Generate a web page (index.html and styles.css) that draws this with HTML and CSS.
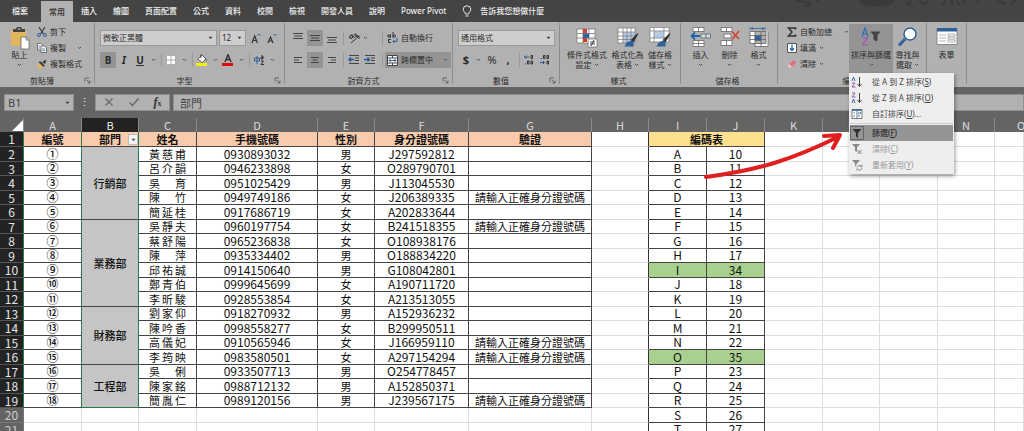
FILE: index.html
```html
<!DOCTYPE html>
<html lang="zh-Hant">
<head>
<meta charset="utf-8">
<title>Excel 員工資料</title>
<link rel="stylesheet" href="styles.css">
</head>
<body>
<svg class="defs" aria-hidden="true">
  <symbol id="chev" viewBox="0 0 5 4"><path d="M1 1l1.500 1.500L4 1" fill="none" stroke="#4a4a4a" stroke-width=".9"/></symbol>
  <symbol id="tri" viewBox="0 0 5 4"><path d="M.6.8h3.800L2.500 3z" fill="#333"/></symbol>
  <symbol id="launch" viewBox="0 0 7 7"><path d="M1 5V1h4M3 3l3 3M6 3.500V6H3.500" fill="none" stroke="#555" stroke-width=".8"/></symbol>
  <symbol id="brush" viewBox="0 0 12 12"><path d="M11.500.5L6 6l1.500 1.500z" fill="#333" stroke="#333"/><path d="M6 6.500L2 8 0 11.500h8L7.500 8z" fill="#2e6399"/></symbol>
</svg>

<nav class="tabs">
  <button class="tab file">檔案</button><button class="tab active">常用</button><button class="tab">插入</button><button class="tab">繪圖</button><button class="tab">頁面配置</button><button class="tab">公式</button><button class="tab">資料</button><button class="tab">校閱</button><button class="tab">檢視</button><button class="tab">開發人員</button><button class="tab">說明</button><button class="tab">Power Pivot</button>
  <button class="tab tell"><svg width="10" height="13" viewBox="0 0 10 13" fill="none" stroke="#e8e8e8"><path d="M3.500 9C3.500 7.500 1.200 6.500 1.200 4.300a3.800 3.500 0 0 1 7.600 0C8.800 6.500 6.500 7.500 6.500 9zM3.500 11h3"/></svg>告訴我您想做什麼</button>
  <svg class="doodle" width="230" height="9" viewBox="0 0 230 9" fill="none" stroke="#3a3a3a" stroke-width="2"><path d="M2 0l12 3M22 0l3 2M10 7M11 2l6 4M17 2l-6 4M14 1v6" /><path d="M66 0c0 7 34 7 34 0" fill="#3a3a3a"/><path d="M112 1l5 4M117 1l-5 4M125 0l4 5M134 1l-4 4M148 6l4-5M158 0v6M166 6l-3-5M172 3l-5-3M185 0l-2 2M204 0l8 4M222 0l-6 4"/></svg>
</nav>

<div class="ribbon">
  <section class="group g-clip">
    <div class="body">
      <button class="big paste"><svg width="20" height="24" viewBox="0 0 20 24"><path d="M1 4h15v16H1z" fill="#e2b65c"/><path d="M3 6V3h3l1-2h4l1 2h3v3z" fill="#444"/><circle cx="9" cy="3" r="1" fill="#b0b0b0"/><path d="M11 11h5l3 3v9h-8z" fill="#fff" stroke="#555" stroke-width=".7"/><path d="M16 11v3h3" fill="none" stroke="#555" stroke-width=".7"/></svg>貼上<svg class="chev"><use href="#chev"/></svg></button>
      <div class="stack">
        <button class="small"><svg width="10" height="10" viewBox="0 0 10 10" fill="none"><path d="M2 0l4.500 7M8 0L3.500 7" stroke="#333" stroke-width="1.100"/><circle cx="2" cy="8" r="1.500" stroke="#2f6399"/><circle cx="8" cy="8" r="1.500" stroke="#2f6399"/></svg>剪下</button>
        <button class="small"><svg width="10" height="10" viewBox="0 0 10 10" fill="#fff" stroke="#555" stroke-width=".8"><path d="M.5.5h3.500l1.500 1.500v5h-5z"/><path d="M4 3h3.500L9.500 5v4.500H4z"/><path d="M5.200 6h3M5.200 7.700h3M1.500 3h2M1.500 5h2" stroke="#2f6399"/></svg>複製<svg class="chev push"><use href="#chev"/></svg></button>
        <button class="small"><svg width="10" height="10" viewBox="0 0 10 10"><path d="M5 3L9.500.5 8 5z" fill="#333"/><path d="M3 2l5 4.500L6.500 8 1.500 3.500z" fill="#444"/><path d="M1.500 4L6 8l-3 2-3-3z" fill="#e2b65c"/></svg>複製格式</button>
      </div>
    </div>
    <div class="caption"><span>剪貼簿</span><button class="launch" aria-label="剪貼簿設定"><svg><use href="#launch"/></svg></button></div>
  </section>

  <section class="group g-font">
    <div class="body rows">
      <div class="line">
        <label class="combo font-name"><select aria-label="字型"><option>微軟正黑體</option></select><svg class="chev"><use href="#tri"/></svg></label>
        <label class="combo font-size"><select aria-label="字型大小"><option>12</option></select><svg class="chev"><use href="#tri"/></svg></label>
        <button class="ico grow" aria-label="放大字型"><svg width="10" height="11" viewBox="0 0 10 11" fill="none" stroke="#333"><path d="M1 10l2.700-7 2.700 7M2 7.500h3.500" stroke-width="1.200"/><path d="M6.500 2.500L8 1l1.500 1.500" stroke="#2f6399"/></svg></button>
        <button class="ico" aria-label="縮小字型"><svg width="10" height="11" viewBox="0 0 10 11" fill="none" stroke="#333"><path d="M1 10l2.500-6L6 10M2 8h3" stroke-width="1.200"/><path d="M6.500 1L8 2.500 9.500 1" stroke="#2f6399"/></svg></button>
      </div>
      <div class="line">
        <button class="ico on"><b>B</b></button><button class="ico"><b><i>I</i></b></button><button class="ico"><b><u>U</u></b></button><svg class="chev"><use href="#chev"/></svg><span class="sep"></span>
        <button class="ico" aria-label="框線"><svg width="10" height="10" viewBox="0 0 10 10"><path d="M0 0h10v10H0z" fill="#fff"/><path d="M.5.5h9v9h-9zM5 0v10M0 5h10" fill="none" stroke="#999" stroke-width=".8"/></svg></button><svg class="chev"><use href="#chev"/></svg><span class="sep"></span>
        <button class="ico" aria-label="填滿色彩"><svg width="12" height="12" viewBox="0 0 12 12"><path d="M2 5l4-4 4 4-4 3.500z" fill="#fff" stroke="#444" stroke-width=".8"/><path d="M5 4V0" stroke="#444"/><path d="M10 4q2 2 .5 4z" fill="#2f6399"/><path d="M0 9h11v3H0z" fill="#f2f200"/></svg></button><svg class="chev"><use href="#chev"/></svg>
        <button class="ico" aria-label="字型色彩"><svg width="12" height="12" viewBox="0 0 12 12"><path d="M3 8l3-7.500L9 8M4 5.500h4" fill="none" stroke="#333" stroke-width="1.400"/><path d="M0 9h11v3H0z" fill="#e00808"/></svg></button><svg class="chev"><use href="#chev"/></svg><span class="sep"></span>
        <button class="ico" aria-label="注音標示"><svg width="11" height="12" viewBox="0 0 11 12" fill="none"><path d="M.5 4h5v3h-5zM3 2v8" stroke="#2f6399"/><path d="M7 2h2v3H7V3.500h2M7 7h2.500L7 10.500h3" stroke="#333"/></svg></button><svg class="chev"><use href="#chev"/></svg>
      </div>
    </div>
    <div class="caption"><span>字型</span><button class="launch" aria-label="字型設定"><svg><use href="#launch"/></svg></button></div>
  </section>

  <section class="group g-align">
    <div class="body rows">
      <div class="line">
        <button class="ico" aria-label="靠上對齊"><svg width="10" height="12" viewBox="0 0 10 12" stroke="#444"><path d="M0 1.500h10M1 4h8M0 6.500h10"/></svg></button><button class="ico on tight" aria-label="置中對齊"><svg width="10" height="12" viewBox="0 0 10 12" stroke="#444"><path d="M0 3.500h10M1 6h8M0 8.500h10"/></svg></button><button class="ico" aria-label="靠下對齊"><svg width="10" height="12" viewBox="0 0 10 12" stroke="#444"><path d="M0 5.500h10M1 8h8M0 10.500h10"/></svg></button><span class="sep"></span>
        <button class="ico" aria-label="方向"><svg width="12" height="12" viewBox="0 0 12 12" fill="none" stroke="#333"><circle cx="3" cy="5" r="1.500"/><path d="M3.500 2l3 4M6.500 2l1.500 3q2-1 .5-2.500t-2 0M3 11l8-7M11 7V4H8.500"/></svg></button><svg class="chev"><use href="#chev"/></svg><span class="sep wide"></span>
        <button class="wrap"><svg width="11" height="12" viewBox="0 0 11 12" fill="none" stroke="#333"><circle cx="2" cy="4" r="1.200"/><path d="M3.500 2.500V5.500M6 0v5.500"/><circle cx="7.300" cy="4" r="1.200"/><path d="M4 7.500H1.500v3H4"/><path d="M10 6v3.500H6M7.500 8L6 9.500 7.500 11" stroke="#2f6399"/></svg>自動換行</button>
      </div>
      <div class="line">
        <button class="ico" aria-label="靠左對齊"><svg width="10" height="12" viewBox="0 0 10 12" stroke="#444"><path d="M1 3.500h8M1 6h5M1 8.500h8"/></svg></button><button class="ico on tight" aria-label="置中"><svg width="10" height="12" viewBox="0 0 10 12" stroke="#444"><path d="M1 3.500h8M2.500 6h5M1 8.500h8"/></svg></button><button class="ico" aria-label="靠右對齊"><svg width="10" height="12" viewBox="0 0 10 12" stroke="#444"><path d="M1 3.500h8M4 6h5M1 8.500h8"/></svg></button><span class="sep"></span>
        <button class="ico" aria-label="減少縮排"><svg width="12" height="10" viewBox="0 0 12 10" stroke="#444" fill="none"><path d="M1 .5h10M7 3h4M7 5.500h4M1 8.500h10"/><path d="M6 4.500H1M3 2.500l-2 2 2 2" stroke="#24589c" stroke-width="1.400"/></svg></button><button class="ico" aria-label="增加縮排"><svg width="12" height="10" viewBox="0 0 12 10" stroke="#444" fill="none"><path d="M1 .5h10M7 3h4M7 5.500h4M1 8.500h10"/><path d="M0 4.500h5M3.500 2.500l2 2-2 2" stroke="#24589c" stroke-width="1.400"/></svg></button><span class="sep last"></span>
        <button class="wrap on"><svg width="11" height="11" viewBox="0 0 11 11" fill="none"><path d="M.5.500h10v10H.5z" fill="#fff" stroke="#444"/><path d="M.5 3h10M.5 8h10M5.500 0v3M5.500 8v3" stroke="#444"/><path d="M2 5.500h7M3.500 4L2 5.500 3.500 7M7.500 4L9 5.500 7.500 7" stroke="#2f6399"/></svg>跨欄置中<svg class="chev push"><use href="#chev"/></svg></button>
      </div>
    </div>
    <div class="caption"><span>對齊方式</span><button class="launch" aria-label="對齊設定"><svg><use href="#launch"/></svg></button></div>
  </section>

  <section class="group g-num">
    <div class="body rows">
      <div class="line"><label class="combo format"><select aria-label="數值格式"><option>通用格式</option></select><svg class="chev"><use href="#tri"/></svg></label></div>
      <div class="line">
        <button class="ico sym"><b>$</b></button><svg class="chev"><use href="#chev"/></svg><button class="ico sym">%</button><button class="ico sym"><b>,</b></button><span class="sep"></span>
        <button class="ico" aria-label="增加小數位數"><svg width="10" height="10" viewBox="0 0 10 10" fill="none" stroke="#333"><path d="M5 2H.5M2 .5L.5 2 2 3.500" stroke="#24589c"/><path d="M7 .5h1.500v3H7zM3.500 6H5v3H3.500zM7 6h1.500v3H7zM1 9h1"/></svg></button><button class="ico" aria-label="減少小數位數"><svg width="10" height="10" viewBox="0 0 10 10" fill="none" stroke="#333"><path d="M0 7.500h4.500M3 6l1.500 1.500L3 9" stroke="#24589c"/><path d="M3.500.5H5v3H3.500zM7 .5h1.500v3H7zM7 6h1.500v3H7zM1 3.500h1"/></svg></button>
      </div>
    </div>
    <div class="caption"><span>數值</span><button class="launch" aria-label="數值設定"><svg><use href="#launch"/></svg></button></div>
  </section>

  <section class="group g-style">
    <div class="body">
      <button class="big w5"><svg width="22" height="21" viewBox="0 0 22 21"><path d="M1 2h18v14H1z" fill="#fff"/><path d="M1 2h18v14H1zM1 6.500h18M1 11h18M7 2v14M13 2v14" fill="none" stroke="#777" stroke-width=".8"/><path d="M7 2h4v4H7zM7 11h4v4H7z" fill="#c8442c"/><path d="M7 6.500h6V11H7z" fill="#2f6399"/><path d="M12 12h9v8h-9z" fill="#fff" stroke="#777" stroke-width=".8"/><path d="M14 15h5M14 17h5M18 13l-3 6" stroke="#333" stroke-width=".9"/></svg><span>條件式格式<br>設定 <svg class="chev"><use href="#chev"/></svg></span></button>
      <button class="big w4"><svg width="22" height="21" viewBox="0 0 22 21"><path d="M1 1h17v15H1z" fill="#fff"/><path d="M6 5h12v11H6z" fill="#b7cce4"/><path d="M1 1h17v15H1zM1 5h17M1 9h17M1 12.500h17M6 1v15M10 1v15M14 1v15" fill="none" stroke="#777" stroke-width=".7"/><use href="#brush" x="7" y="6" width="15" height="14"/></svg><span>格式化為<br>表格 <svg class="chev"><use href="#chev"/></svg></span></button>
      <button class="big w3"><svg width="22" height="21" viewBox="0 0 22 21"><path d="M1 0h19v15H1z" fill="#fff"/><path d="M5 4h10v7H5z" fill="#b7cce4"/><path d="M1 .5h19v14.500H1zM1 4h19M1 11h19M5 0v15M15 0v15" fill="none" stroke="#777" stroke-width=".7"/><use href="#brush" x="7" y="6" width="15" height="14"/></svg><span>儲存格<br>樣式 <svg class="chev"><use href="#chev"/></svg></span></button>
    </div>
    <div class="caption"><span>樣式</span></div>
  </section>

  <section class="group g-cells">
    <div class="body">
      <button class="big"><svg width="22" height="21" viewBox="0 0 22 21" fill="#fff" stroke="#666" stroke-width=".8"><path d="M3 .5h11v4H3zM8.500.5v4M3 13.500h11v6H3zM8.500 13.500v6M3 16.500h11"/><path d="M11 7h9.500v4H11zM16 7v4" fill="#cbd9e8"/><path d="M10 9H1M5 5.500L1.500 9 5 12.500" fill="none" stroke="#2463a6" stroke-width="1.800"/></svg>插入<svg class="chev"><use href="#chev"/></svg></button>
      <button class="big"><svg width="22" height="21" viewBox="0 0 22 21" fill="#fff" stroke="#666" stroke-width=".8"><path d="M2 .5h11v4H2zM7.500.5v4M2 13.500h11v5H2zM7.500 13.500v5M5 7h7v4H5z"/><path d="M13 4.500l7 7.500M20 4l-7 8.500" stroke="#d2432c" stroke-width="1.600"/></svg>刪除<svg class="chev"><use href="#chev"/></svg></button>
      <button class="big"><svg width="22" height="21" viewBox="0 0 22 21" fill="#fff" stroke="#666" stroke-width=".8"><path d="M2 4.500h16v12H2zM2 8.500h16M2 12.500h16M7 4.500v15h13v-15M13 4.500v15"/><path d="M7 8.500h6v5H7z" fill="#2f6399"/><path d="M3 1.500h13M5 0L3 1.500 5 3M14 0l2 1.500L14 3M2 0v3M17 0v3" fill="none" stroke="#2f6399"/></svg>格式<svg class="chev"><use href="#chev"/></svg></button>
    </div>
    <div class="caption"><span>儲存格</span></div>
  </section>

  <section class="group g-edit">
    <div class="body">
      <div class="stack">
        <button class="small"><svg width="10" height="10" viewBox="0 0 10 10"><path d="M8.500 2.500V1h-7L5 5 1.500 9h7V7.500" fill="none" stroke="#333" stroke-width="1.500"/></svg>自動加總<svg class="chev push"><use href="#chev"/></svg></button>
        <button class="small"><svg width="10" height="10" viewBox="0 0 10 10"><path d="M.5.5h9v9h-9z" fill="#fff" stroke="#555"/><path d="M5 1.500V7M3 5.200L5 7.500l2-2.300" fill="none" stroke="#2463a6" stroke-width="1.300"/></svg>填滿 <svg class="chev"><use href="#chev"/></svg></button>
        <button class="small"><svg width="10" height="10" viewBox="0 0 10 10"><path d="M7 1l2 2.500L5 8 2 5z" fill="#e56f80"/><path d="M2 5l3 3-1.500 1L1 7z" fill="#f4c6cc"/></svg>清除 <svg class="chev"><use href="#chev"/></svg></button>
      </div>
      <div class="drop">
        <button class="big on sort"><svg width="22" height="21" viewBox="0 0 22 21" fill="none"><path d="M2 9.500L5 1l3 8.500M3 7h4" stroke="#2f6fb4" stroke-width="1.200"/><path d="M2.500 11h5l-5 7h5.500" stroke="#a34fb4" stroke-width="1.200"/><path d="M10.500 5h10M17 9v5l-3-1.500V9" stroke="#444"/><path d="M11 5h9l-3 4v5l-3-1.500V9z" fill="#444"/></svg>排序與篩選<svg class="chev"><use href="#chev"/></svg></button>
        <div class="menu" role="menu">
          <button role="menuitem"><svg width="12" height="12" viewBox="0 0 12 12" fill="none"><path d="M1 5l1.500-4L4 5" stroke="#2f6fb4"/><path d="M1 7h3l-3 4h3.500" stroke="#a34fb4"/><path d="M8.500 1v9M6.500 8l2 2.500 2-2.500" stroke="#444"/></svg><span>從 A 到 Z 排序(<u>S</u>)</span></button>
          <button role="menuitem"><svg width="12" height="12" viewBox="0 0 12 12" fill="none"><path d="M1 1h3L1 5h3.500" stroke="#a34fb4"/><path d="M1 11l1.500-4L4 11" stroke="#2f6fb4"/><path d="M8.500 1v9M6.500 8l2 2.500 2-2.500" stroke="#444"/></svg><span>從 Z 到 A 排序(<u>O</u>)</span></button>
          <button role="menuitem"><svg width="12" height="12" viewBox="0 0 12 12" fill="#fff" stroke="#555" stroke-width=".8"><path d="M1 1.500h10v9H1zM6 1.500v9"/><path d="M1 2h10" stroke="#2f6399" stroke-width="1.500"/><path d="M3 4v1.500M3 7v2M8 4v5M9.500 4v2" stroke="#2f6fb4"/></svg><span>自訂排序(<u>U</u>)...</span></button>
          <hr>
          <button role="menuitem" class="sel"><svg width="14" height="14" viewBox="0 0 14 14"><path d="M.5.5h13v13H.5z" fill="none" stroke="#666"/><path d="M2.500 3h9L8 7v5l-2-1.500V7z" fill="#333"/></svg><span>篩選(<u>F</u>)</span></button>
          <button role="menuitem" disabled><svg width="12" height="12" viewBox="0 0 12 12"><path d="M1 1h8L6 4.500V9L4 8V4.500z" fill="#8a8a8a"/><path d="M6.500 7l4 4M10.500 7l-4 4" stroke="#777"/></svg><span>清除(<u>C</u>)</span></button>
          <button role="menuitem" disabled><svg width="12" height="12" viewBox="0 0 12 12"><path d="M1 1h8L6 4.500 4 8V4.500z" fill="#8a8a8a"/><path d="M6 8.500a2.500 2.500 0 0 1 4.500-1M11 5.500v2.200H9M11 9a2.500 2.500 0 0 1-4.500 1M6 11.500V9.500" fill="none" stroke="#888"/></svg><span>重新套用(<u>Y</u>)</span></button>
        </div>
      </div>
      <button class="big find"><svg width="22" height="21" viewBox="0 0 22 21"><path d="M8 12l-6 6.500" stroke="#2f6399" stroke-width="3"/><circle cx="13" cy="7" r="6" fill="#fff" stroke="#2f6399" stroke-width="1.500"/></svg><span>尋找與<br>選取 <svg class="chev"><use href="#chev"/></svg></span></button>
    </div>
    <div class="caption"><span>編輯</span></div>
  </section>

  <section class="group g-form">
    <div class="body">
      <button class="big"><svg width="22" height="21" viewBox="0 0 22 21"><path d="M1 1.500h20v16H1z" fill="#fff" stroke="#777" stroke-width=".8"/><path d="M1 1h20v3.500H1z" fill="#2f5f95"/><path d="M3 8h7M3 11h7M3 14h7M12 7h7v2h-7zM12 10h7v2h-7zM12 13h7v2h-7z" fill="none" stroke="#999" stroke-width=".7"/></svg>表單</button>
    </div>
    <div class="caption"><span>表單</span></div>
  </section>
</div>

<div class="formula">
  <label class="namebox"><input value="B1" aria-label="名稱方塊"><svg class="chev"><use href="#tri"/></svg></label>
  <span class="dots">⋮</span>
  <div class="fxbox">
    <button aria-label="取消"><svg width="10" height="10" viewBox="0 0 10 10"><path d="M1.500 1.500l7 7M8.500 1.500l-7 7" stroke="#666" stroke-width="1.200"/></svg></button>
    <button aria-label="輸入"><svg width="10" height="10" viewBox="0 0 10 10"><path d="M.5 5.500L3.500 8.500l6-7" fill="none" stroke="#666" stroke-width="1.400"/></svg></button>
    <button class="fx"><i>f</i>x</button>
  </div>
  <input class="content" value="部門" aria-label="資料編輯列">
</div>

<main class="sheet">
<table>
  <colgroup><col class="c-row"><col class="c58"><col class="c57"><col class="c58"><col class="c-phone"><col class="c57"><col class="c-id"><col class="c-check"><col class="c57"><col class="c58"><col class="c58"><col class="c58"><col class="c57"><col class="c58"><col class="c57"><col></colgroup>
  <thead><tr><th class="corner"><svg width="11" height="11" viewBox="0 0 11 11"><path d="M11 0v11H0z" fill="#fff"/></svg></th><th>A</th><th class="cur">B</th><th>C</th><th>D</th><th>E</th><th>F</th><th>G</th><th>H</th><th>I</th><th>J</th><th>K</th><th>L</th><th>M</th><th>N</th><th class="cut">O</th></tr></thead>
  <tbody>
  <tr class="head"><th>1</th><td class="d a">編號</td><td class="d b">部門<button class="filter" aria-label="篩選"><svg width="5" height="4" viewBox="0 0 5 4"><path d="M.5.8h4L2.500 3.200z" fill="#555"/></svg></button></td><td class="d">姓名</td><td class="d">手機號碼</td><td class="d">性別</td><td class="d">身分證號碼</td><td class="d">驗證</td><td class="h"></td><td class="d code" colspan="2">編碼表</td><td></td><td></td><td></td><td></td><td></td></tr>
  <tr><th>2</th><td class="d a">①</td><td class="d b" rowspan="5">行銷部</td><td class="d name">黃慈甫</td><td class="d">0930893032</td><td class="d z">男</td><td class="d">J297592812</td><td class="d z"></td><td class="h"></td><td class="d">A</td><td class="d">10</td><td></td><td></td><td></td><td></td><td></td></tr>
  <tr><th>3</th><td class="d a">②</td><td class="d name">呂介韻</td><td class="d">0946233898</td><td class="d z">女</td><td class="d">O289790701</td><td class="d z"></td><td class="h"></td><td class="d">B</td><td class="d">11</td><td></td><td></td><td></td><td></td><td></td></tr>
  <tr><th>4</th><td class="d a">③</td><td class="d name">吳 育</td><td class="d">0951025429</td><td class="d z">男</td><td class="d">J113045530</td><td class="d z"></td><td class="h"></td><td class="d">C</td><td class="d">12</td><td></td><td></td><td></td><td></td><td></td></tr>
  <tr><th>5</th><td class="d a">④</td><td class="d name">陳 竹</td><td class="d">0949749186</td><td class="d z">女</td><td class="d">J206389335</td><td class="d z">請輸入正確身分證號碼</td><td class="h"></td><td class="d">D</td><td class="d">13</td><td></td><td></td><td></td><td></td><td></td></tr>
  <tr><th>6</th><td class="d a">⑤</td><td class="d name">簡延桂</td><td class="d">0917686719</td><td class="d z">女</td><td class="d">A202833644</td><td class="d z"></td><td class="h"></td><td class="d">E</td><td class="d">14</td><td></td><td></td><td></td><td></td><td></td></tr>
  <tr><th>7</th><td class="d a">⑥</td><td class="d b" rowspan="6">業務部</td><td class="d name">吳靜夫</td><td class="d">0960197754</td><td class="d z">女</td><td class="d">B241518355</td><td class="d z">請輸入正確身分證號碼</td><td class="h"></td><td class="d">F</td><td class="d">15</td><td></td><td></td><td></td><td></td><td></td></tr>
  <tr><th>8</th><td class="d a">⑦</td><td class="d name">蔡舒陽</td><td class="d">0965236838</td><td class="d z">女</td><td class="d">O108938176</td><td class="d z"></td><td class="h"></td><td class="d">G</td><td class="d">16</td><td></td><td></td><td></td><td></td><td></td></tr>
  <tr><th>9</th><td class="d a">⑧</td><td class="d name">陳 萍</td><td class="d">0935334402</td><td class="d z">男</td><td class="d">O188834220</td><td class="d z"></td><td class="h"></td><td class="d">H</td><td class="d">17</td><td></td><td></td><td></td><td></td><td></td></tr>
  <tr><th>10</th><td class="d a">⑨</td><td class="d name">邱祐誠</td><td class="d">0914150640</td><td class="d z">男</td><td class="d">G108042801</td><td class="d z"></td><td class="h"></td><td class="d hit">I</td><td class="d hit">34</td><td></td><td></td><td></td><td></td><td></td></tr>
  <tr><th>11</th><td class="d a">⑩</td><td class="d name">鄭青伯</td><td class="d">0999645699</td><td class="d z">女</td><td class="d">A190711720</td><td class="d z"></td><td class="h"></td><td class="d">J</td><td class="d">18</td><td></td><td></td><td></td><td></td><td></td></tr>
  <tr><th>12</th><td class="d a">⑪</td><td class="d name">李昕駿</td><td class="d">0928553854</td><td class="d z">女</td><td class="d">A213513055</td><td class="d z"></td><td class="h"></td><td class="d">K</td><td class="d">19</td><td></td><td></td><td></td><td></td><td></td></tr>
  <tr><th>13</th><td class="d a">⑫</td><td class="d b" rowspan="4">財務部</td><td class="d name">劉家仰</td><td class="d">0918270932</td><td class="d z">男</td><td class="d">A152936232</td><td class="d z"></td><td class="h"></td><td class="d">L</td><td class="d">20</td><td></td><td></td><td></td><td></td><td></td></tr>
  <tr><th>14</th><td class="d a">⑬</td><td class="d name">陳吟香</td><td class="d">0998558277</td><td class="d z">女</td><td class="d">B299950511</td><td class="d z"></td><td class="h"></td><td class="d">M</td><td class="d">21</td><td></td><td></td><td></td><td></td><td></td></tr>
  <tr><th>15</th><td class="d a">⑭</td><td class="d name">高儀妃</td><td class="d">0910565946</td><td class="d z">女</td><td class="d">J166959110</td><td class="d z">請輸入正確身分證號碼</td><td class="h"></td><td class="d">N</td><td class="d">22</td><td></td><td></td><td></td><td></td><td></td></tr>
  <tr><th>16</th><td class="d a">⑮</td><td class="d name">李筠映</td><td class="d">0983580501</td><td class="d z">女</td><td class="d">A297154294</td><td class="d z">請輸入正確身分證號碼</td><td class="h"></td><td class="d hit">O</td><td class="d hit">35</td><td></td><td></td><td></td><td></td><td></td></tr>
  <tr><th>17</th><td class="d a">⑯</td><td class="d b end" rowspan="3">工程部</td><td class="d name">吳 俐</td><td class="d">0933507713</td><td class="d z">男</td><td class="d">O254778457</td><td class="d z"></td><td class="h"></td><td class="d">P</td><td class="d">23</td><td></td><td></td><td></td><td></td><td></td></tr>
  <tr><th>18</th><td class="d a">⑰</td><td class="d name">陳家銘</td><td class="d">0988712132</td><td class="d z">男</td><td class="d">A152850371</td><td class="d z"></td><td class="h"></td><td class="d">Q</td><td class="d">24</td><td></td><td></td><td></td><td></td><td></td></tr>
  <tr><th>19</th><td class="d a">⑱</td><td class="d name">簡胤仁</td><td class="d">0989120156</td><td class="d z">男</td><td class="d">J239567175</td><td class="d z">請輸入正確身分證號碼</td><td class="h"></td><td class="d">R</td><td class="d">25</td><td></td><td></td><td></td><td></td><td></td></tr>
  <tr><th class="off">20</th><td></td><td></td><td></td><td></td><td></td><td></td><td></td><td class="h"></td><td class="d">S</td><td class="d">26</td><td></td><td></td><td></td><td></td><td></td></tr>
  <tr><th class="off">21</th><td></td><td></td><td></td><td></td><td></td><td></td><td></td><td class="h"></td><td class="d">T</td><td class="d">27</td><td></td><td></td><td></td><td></td><td></td></tr>
  </tbody>
</table>
<svg class="arrow" width="150" height="56" viewBox="0 0 150 56" fill="none" stroke="#e02020" stroke-width="4" stroke-linecap="round" stroke-linejoin="round"><path d="M7 49C60 42 92 32 139 9M125 8l16-1-7 13"/></svg>
</main>
</body>
</html>
```

FILE: styles.css
```css
* { box-sizing: border-box; }

body {
  margin: 0;
  height: 100vh;
  display: flex;
  flex-direction: column;
  overflow: hidden;
  background: #646464;
  color: #2b2b2b;
  font: 8px/10px "Noto Sans", "Noto Sans CJK TC", sans-serif;
}

button, input, select { font: inherit; color: inherit; margin: 0; }
button { border: 0; padding: 0; background: none; white-space: nowrap; }
svg { flex: none; }
.defs { position: absolute; width: 0; height: 0; }
.chev { width: 5px; height: 4px; }
.on { background: #949494; }

/* Tab strip */
.tabs { display: flex; height: 22px; background: #444; color: #f0f0f0; }
.tab { padding: 0 8px; font-weight: 500; }
.tab.file { padding: 0 13px 0 12px; }
.tab.active { background: #b1b1b1; color: #333; margin-top: 1px; }
.tab.tell { display: flex; align-items: center; gap: 8px; }
.doodle { margin-left: auto; }

/* Ribbon */
.ribbon { display: flex; height: 65px; background: #b1b1b1; }
.group {
  display: flex;
  flex-direction: column;
  min-width: 0;
  padding-top: 2px;
  border-right: 1px solid #8c8c8c;
  border-image: linear-gradient(transparent 2px, #8c8c8c 2px, #8c8c8c 61px, transparent 61px) 1;
  border-width: 0 1px 0 0;
}
.g-clip { flex: 0 0 95px; }
.g-font { flex: 0 0 190px; }
.g-align { flex: 0 0 168px; }
.g-num { flex: 0 0 107px; }
.g-style { flex: 0 0 121px; }
.g-cells { flex: 0 0 97px; }
.g-edit { flex: 0 0 149px; }
.g-form { flex: 0 0 40px; }

.body { flex: 1; display: flex; }
.rows { flex-direction: column; justify-content: center; gap: 6px; padding-left: 5px; }
.line { display: flex; align-items: center; height: 16px; }
.caption { display: flex; align-items: center; height: 13px; padding-right: 3px; }
.caption span { flex: 1; text-align: center; }
.launch, .launch svg { display: block; width: 7px; height: 7px; }

.stack { display: flex; flex-direction: column; }
.small { display: flex; align-items: center; gap: 3px; height: 16px; }
.push { margin-left: auto; }
.big {
  display: flex;
  flex-direction: column;
  align-items: center;
  flex: 0 0 29px;
  padding-top: 3px;
}
.big > svg:first-child { margin-bottom: 2px; }
.big > .chev { margin-top: 3px; }
.big .chev { vertical-align: 1px; }

.g-clip .big { flex-basis: 29px; margin: 0 3px 0 5px; padding-top: 2px; }
.g-clip .big > svg:first-child { margin-bottom: 0; }
.g-clip .stack { flex: 0 0 42px; }
.g-style .body { padding-left: 6px; }
.w5 { flex-basis: 42px; }
.w4 { flex-basis: 39px; }
.w3 { flex-basis: 26px; }
.g-cells .body { padding-left: 5px; }
.g-edit .body { padding-left: 9px; }
.g-edit .stack { flex: 0 0 62px; }
.g-form .body { justify-content: center; }

.combo, .namebox { display: grid; grid-template-columns: 1fr 9px; align-items: center; }
.combo { height: 16px; }
.combo select {
  grid-area: 1 / 1 / 2 / 3;
  appearance: none;
  width: 100%;
  height: 16px;
  padding: 0 2px;
  border: 1px solid #999;
  border-radius: 0;
  background: #cecece;
}
.combo svg, .namebox svg { grid-area: 1 / 2; pointer-events: none; }
.font-name { width: 117px; }
.font-size { width: 27px; margin-left: 2px; }
.format { width: 97px; }

.ico { display: flex; flex: none; align-items: center; justify-content: center; width: 16px; height: 16px; font-size: 10px; }
.ico.grow { margin-left: 2px; }
.sep { width: 1px; height: 14px; background: #999; }
.g-font .sep { margin: 0 1px 0 3px; }
.g-font .line > .chev { margin: 0 2px 0 3px; }
.g-align .ico.tight { margin: 0 1px; }
.g-align .sep { margin: 0 2px 0 3px; }
.g-align .line > .chev { margin-left: 1px; }
.g-align .sep.wide { margin-left: 14px; }
.g-align .sep.last { margin-left: 4px; }
.wrap { display: flex; align-items: center; gap: 3px; height: 16px; width: 66px; padding: 0 3px 0 2px; }
.sym { font-size: 11px; }
.g-num .sep { margin: 0 1px 0 3px; }
.g-num .line > .chev { margin: 0 3px 0 2px; }

/* Sort and filter menu */
.drop { position: relative; display: flex; flex: 0 0 44px; }
.sort { flex: 1; }
.menu {
  position: absolute;
  z-index: 2;
  top: 49px;
  left: 0;
  width: 105px;
  padding: 1px;
  background: #eee;
  box-shadow: 1px 2px 4px #0006;
  color: #444;
}
.menu button { display: grid; grid-template-columns: 14px 1fr; gap: 8px; align-items: center; justify-items: center; width: 100%; height: 16px; }
.menu span { justify-self: start; }
.menu hr { height: 1px; margin: 1px 0; border: 0; background: #ccc; }
.menu .sel { background: #949494; color: #222; }
.menu button:disabled { color: #999; }

/* Formula bar */
.formula { display: flex; height: 31px; padding: 7px 0 7px 4px; font-size: 11px; color: #444; }
.formula input { min-width: 0; border: 1px solid #8f8f8f; background: #b1b1b1; }
.namebox { width: 70px; }
.namebox input { grid-area: 1 / 1 / 2 / 3; width: 100%; height: 17px; padding: 0 3px; }
.dots { width: 21px; text-align: center; line-height: 16px; color: #eee; }
.fxbox { display: flex; justify-content: space-around; width: 75px; background: #b1b1b1; border: 1px solid #8f8f8f; }
.fx { font-family: "Liberation Serif", serif; font-weight: bold; font-size: 8px; color: #333; }
.fx i { font-size: 12px; }
.content { flex: 1; margin-left: 3px; padding: 0 6px; }

/* Worksheet */
.sheet { position: relative; flex: 1; min-height: 0; overflow: hidden; background: #fff; }
table { width: 100%; table-layout: fixed; border-collapse: separate; border-spacing: 0; font: 12px/12px "Noto Sans CJK TC", sans-serif; color: #111; text-align: center; }
.c-row { width: 24px; }
.c57 { width: 57px; }
.c58 { width: 58px; }
.c-phone { width: 121px; }
.c-id { width: 94px; }
.c-check { width: 123px; }
th, td { padding: 0; white-space: nowrap; }
thead tr { height: 14px; }
thead th { background: #646464; color: #ddd; font-weight: 400; font-size: 11px; border-right: 1px solid #8a8a8a; }
thead .cur { background: #222; color: #eee; }
thead .corner { text-align: right; }
.corner svg { display: block; margin-left: auto; }
thead .cut { padding-left: 22px; border: 0; }
tbody tr { height: 14px; }
tbody tr:nth-child(even), tbody .head { height: 15px; }
tbody th { background: #232323; color: #e4e4e4; font-weight: 400; border-right: 1px solid #2b7a50; border-bottom: 1px solid #555; }
tbody th.off { background: #646464; color: #ccc; border-color: #777; }
td { padding-bottom: 1px; border-right: 1px solid #ddd; border-bottom: 1px solid #ddd; }
td.h { border-right-color: #333; }
td.d { border-color: #444; }
td.a { border-right-color: #2b7a50; font-weight: 500; }
td.b { position: relative; background: #c5c5c5; border-right-color: #2b7a50; font-size: 11px; font-weight: 500; }
td.end { border-bottom-color: #2b7a50; }
td.z, td.name { font-size: 11px; }
td.name { padding: 0 10px 1px; text-align-last: justify; }
.head .d { background: #f8cbad; font-size: 11px; font-weight: 700; }
.head .code { background: #ffe08f; }
.hit { background: #a9d08e; }
.filter { position: absolute; right: 0; top: 2px; display: grid; place-items: center; width: 10px; height: 11px; background: #f4f4f4; border: 1px solid #bbb; }
.arrow { position: absolute; left: 699px; top: 10px; pointer-events: none; }
```
